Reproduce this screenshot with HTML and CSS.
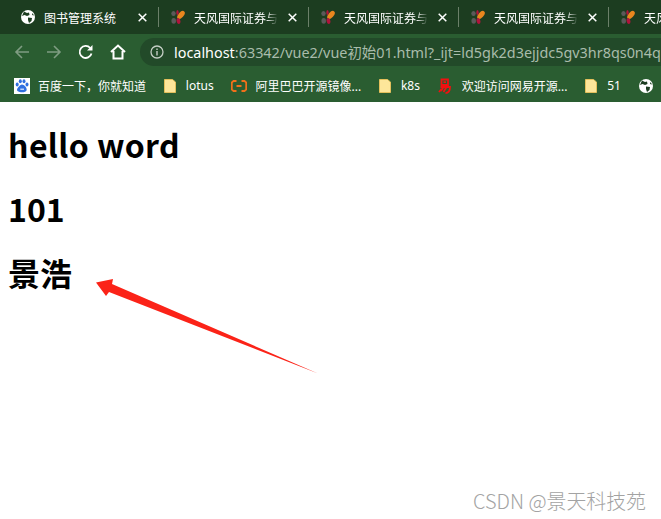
FILE: index.html
```html
<!DOCTYPE html>
<html>

	<head>
		<meta charset="UTF-8">
		<title>图书管理系统</title>
		<link rel="stylesheet" href="styles.css">
	</head>

	<body>
		<svg width="0" height="0" class="defs">
			<symbol id="globe" viewBox="0 0 14 14">
				<circle cx="7" cy="7" r="7" fill="#fff" />
				<path d="M3 1.500 6 3 8 2.500 8.500 5 6 6 3.500 5 1 6zM7 7.500 11 8 10.500 11 8 13 7 10zM11.500 3 13 5.500 11 5z" fill="#1c3d20" />
			</symbol>
			<symbol id="leaf" viewBox="0 0 14 14">
				<ellipse cx="10" cy="5" rx="4.800" ry="2.600" transform="rotate(-48 10 5)" fill="#e8871e" />
				<ellipse cx="6.500" cy="2.500" rx="1.200" ry="2.500" fill="#b0143c" />
				<ellipse cx="2.500" cy="3.500" rx="2.200" ry="2.600" fill="#5a5a5a" />
				<ellipse cx="2.700" cy="10.800" rx="2.300" ry="2.900" fill="#5a5a5a" />
				<ellipse cx="7.500" cy="11" rx="1.900" ry="3" transform="rotate(-10 7.500 11)" fill="#b0143c" />
			</symbol>
			<symbol id="folder" viewBox="0 0 12 14">
				<path d="M.5.500H8.500L11.500 3V13.500H.5z" fill="#fde69a" stroke="#e4c05c" />
			</symbol>
			<symbol id="close" viewBox="0 0 9 9">
				<path d="M.7.700 8.300 8.300M8.300.700 .7 8.300" fill="none" stroke="#fff" stroke-width="1.500" />
			</symbol>
		</svg>

		<div class="tabs">
			<div class="tab">
				<svg class="favicon"><use href="#globe" /></svg>
				<span class="tab-title">图书管理系统</span>
				<svg class="tab-close"><use href="#close" /></svg>
			</div>
			<div class="tab">
				<svg class="favicon"><use href="#leaf" /></svg>
				<span class="tab-title fade">天风国际证券与</span>
				<svg class="tab-close"><use href="#close" /></svg>
			</div>
			<div class="tab">
				<svg class="favicon"><use href="#leaf" /></svg>
				<span class="tab-title fade">天风国际证券与</span>
				<svg class="tab-close"><use href="#close" /></svg>
			</div>
			<div class="tab">
				<svg class="favicon"><use href="#leaf" /></svg>
				<span class="tab-title fade">天风国际证券与</span>
				<svg class="tab-close"><use href="#close" /></svg>
			</div>
			<div class="tab">
				<svg class="favicon"><use href="#leaf" /></svg>
				<span class="tab-title fade">天风国际证券与</span>
				<svg class="tab-close"><use href="#close" /></svg>
			</div>
		</div>

		<div class="toolbar">
			<svg class="nav-icon" viewBox="0 0 16 16"><path d="M15 8H2M8 2 2 8l6 6" fill="none" stroke="#7f9c82" stroke-width="1.600" /></svg>
			<svg class="nav-icon" viewBox="0 0 16 16"><path d="M1 8H14M8 2l6 6-6 6" fill="none" stroke="#7f9c82" stroke-width="1.600" /></svg>
			<svg class="nav-icon" viewBox="0 0 16 16"><path d="M13.500 9.500A6 6 0 1 1 12.200 4" fill="none" stroke="#fff" stroke-width="1.800" /><path d="M14.500 1V6.500H9z" fill="#fff" /></svg>
			<svg class="nav-icon" viewBox="0 0 16 16"><path d="M1 8 8 1.500 15 8M3.500 7V14.500H12.500V7" fill="none" stroke="#fff" stroke-width="2" /></svg>
			<div class="omnibox">
				<svg class="info" viewBox="0 0 14 14"><circle cx="7" cy="7" r="6" fill="none" stroke="#c4cec5" stroke-width="1.300" /><path d="M7 6V10.500M7 3.500V5" stroke="#c4cec5" stroke-width="1.400" /></svg>
				<span class="url"><span class="host">localhost</span>:63342/vue2/vue初始01.html?_ijt=ld5gk2d3ejjdc5gv3hr8qs0n4q</span>
			</div>
		</div>

		<div class="bookmarks">
			<div class="bookmark">
				<svg class="bm-icon" viewBox="0 0 16 16"><rect width="16" height="16" fill="#fff" /><g fill="#2f6fe0"><ellipse cx="3.200" cy="6.500" rx="1.500" ry="2" /><ellipse cx="6.300" cy="3.300" rx="1.500" ry="2" /><ellipse cx="10" cy="3.300" rx="1.500" ry="2" /><ellipse cx="13" cy="6.500" rx="1.500" ry="2" /><path d="M8 6.500c2 0 5.500 3.500 4.500 6s-7 2-9 0.500 2.500-6.500 4.500-6.500z" /></g><path d="M6.300 12V10.500H10V12z" fill="#bcd4fa" /></svg>
				百度一下，你就知道
			</div>
			<div class="bookmark">
				<svg class="bm-icon folder"><use href="#folder" /></svg>
				lotus
			</div>
			<div class="bookmark">
				<svg class="bm-icon" viewBox="0 0 16 16"><path d="M5.500 3H2.500L.8 4.500V11.500L2.500 13H5.500M10.500 3H13.500L15.200 4.500V11.500L13.500 13H10.500M5.500 8H10.500" fill="none" stroke="#f0701a" stroke-width="1.800" /></svg>
				阿里巴巴开源镜像...
			</div>
			<div class="bookmark">
				<svg class="bm-icon folder"><use href="#folder" /></svg>
				k8s
			</div>
			<div class="bookmark">
				<svg class="bm-icon netease" viewBox="0 0 14 16"><path d="M3.500 1.500H10V7H3.500zM5.500 4.200H8M2.500 9H12C12 12 11 15 7.500 15M5.500 9 3 13M8.500 9 5.500 14M1 14 3.500 11" fill="none" stroke="#f01010" stroke-width="1.800" /></svg>
				欢迎访问网易开源...
			</div>
			<div class="bookmark">
				<svg class="bm-icon folder"><use href="#folder" /></svg>
				51
			</div>
			<div class="bookmark">
				<svg class="bm-icon globe"><use href="#globe" /></svg>
			</div>
		</div>

		<div class="content">
			<h1 class="greeting">hello word</h1>
			<h1>101</h1>
			<h1>景浩</h1>
		</div>

		<svg class="arrow" viewBox="0 0 661 519"><path d="M96 282.500 113 279 112 284 318 373.500 109 292 106 296z" fill="#fb2318" /></svg>
		<div class="watermark">CSDN @景天科技苑</div>
	</body>

</html>
```

FILE: styles.css
```css
html,
body {
	width: 100%;
	height: 100%;
	overflow: hidden;
}

body {
	margin: 0;
	position: relative;
	background: #fff;
	font-family: "Noto Sans", "Noto Sans CJK SC", sans-serif;
}

.defs {
	position: absolute;
}

.tabs {
	height: 34px;
	padding-left: 9px;
	display: flex;
	overflow: hidden;
	background: #1c3d20;
}

.tab {
	flex: 0 0 150px;
	box-sizing: border-box;
	height: 20px;
	margin-top: 7px;
	padding-left: 12px;
	display: flex;
	align-items: center;
	color: #fff;
	font-family: "Noto Sans CJK SC", sans-serif;
	font-size: 12px;
	border-right: 1px solid #6b8069;
}

.tab:last-child {
	border-right: 0;
}

.favicon {
	flex: none;
	width: 14px;
	height: 14px;
	margin-right: 9px;
}

.tab-title {
	flex: none;
	width: 84px;
	overflow: hidden;
	white-space: nowrap;
}

.fade {
	-webkit-mask-image: linear-gradient(to right, #000 72px, transparent 84px);
	mask-image: linear-gradient(to right, #000 72px, transparent 84px);
}

.tab-close {
	flex: none;
	width: 9px;
	height: 9px;
	margin-left: 10px;
}

.toolbar {
	height: 35px;
	display: flex;
	align-items: center;
	padding-left: 14px;
	background: #2a5d31;
}

.nav-icon {
	flex: none;
	width: 16px;
	height: 16px;
	margin-right: 16px;
}

.omnibox {
	flex: none;
	width: 560px;
	height: 28px;
	margin-left: -2px;
	padding-left: 10px;
	display: flex;
	align-items: center;
	overflow: hidden;
	border-radius: 14px 0 0 14px;
	background: #224a29;
}

.info {
	flex: none;
	width: 14px;
	height: 14px;
	margin-right: 10px;
}

.url {
	white-space: nowrap;
	font-size: 14.400px;
	color: #a9bcab;
}

.host {
	color: #fff;
}

.bookmarks {
	height: 33px;
	display: flex;
	align-items: center;
	padding-left: 14px;
	gap: 17.800px;
	overflow: hidden;
	white-space: nowrap;
	background: #2a5d31;
	color: #fff;
	font-size: 12px;
}

.bookmark {
	flex: none;
	display: flex;
	align-items: center;
}

.bm-icon {
	flex: none;
	width: 16px;
	height: 16px;
	margin-right: 8px;
}

.bm-icon.folder {
	width: 12px;
	height: 14px;
	margin-right: 10px;
}

.bm-icon.netease {
	width: 14px;
	margin-right: 10px;
}

.bm-icon.globe {
	width: 14px;
	height: 14px;
}

.content {
	padding: 20px 8px;
}

h1 {
	margin: 0 0 20px;
	height: 44px;
	line-height: 44px;
	font-size: 32px;
	font-weight: bold;
	font-family: "Noto Sans CJK SC", sans-serif;
	color: #000;
}

.greeting {
	letter-spacing: .4px;
}

.arrow {
	position: absolute;
	top: 0;
	left: 0;
	width: 661px;
	height: 519px;
}

.watermark {
	position: absolute;
	right: 15px;
	top: 486px;
	font-size: 19.900px;
	font-weight: 300;
	color: #a3a3a3;
	font-family: "Noto Sans CJK SC", sans-serif;
}
```
